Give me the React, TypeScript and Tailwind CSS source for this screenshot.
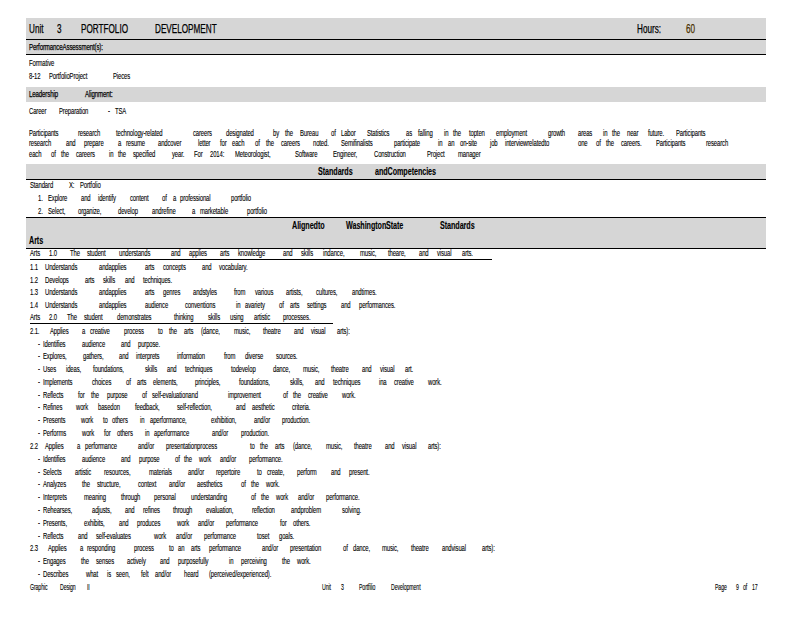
import type { ReactNode } from 'react';

// text "word@x word@x", x measured from the page's left edge
type Row = [y: number, text: string, rule?: number];

const LEFT = 26;

const Words = ({ text, start, squeeze }: { text: string; start: number; squeeze: string }) => {
  const items = text.split(' ').map((chunk) => {
    const at = chunk.lastIndexOf('@');
    return { word: chunk.slice(0, at), x: Number(chunk.slice(at + 1)) };
  });

  return (
    <>
      <span className="shrink-0" style={{ width: items[0].x - start }} />
      {items.map((item, i) => (
        <span
          key={i}
          className={`shrink-0 whitespace-nowrap ${item.word === '60' ? 'text-[#4a3000]' : ''}`}
          style={i < items.length - 1 ? { width: items[i + 1].x - item.x } : undefined}
        >
          <span className={`inline-block origin-left ${squeeze}`}>{item.word}</span>
        </span>
      ))}
    </>
  );
};

const Block = ({
  top,
  rows,
  className = '',
  squeeze = 'scale-x-[0.66]',
}: {
  top: number;
  rows: Row[];
  className?: string;
  squeeze?: string;
}) => (
  <div className={`box-border shrink-0 ${className}`} style={{ paddingTop: rows.length ? rows[0][0] - 6 - top : 0 }}>
    {rows.map(([y, text, rule], i) => {
      const next = rows[i + 1];
      return (
        <div key={i} style={{ height: next ? next[0] - y : 12 }}>
          {rule ? (
            <div className="ml-[4px] box-border flex h-[11px] items-center border-b border-black" style={{ width: rule }}>
              <Words text={text} start={LEFT + 4} squeeze={squeeze} />
            </div>
          ) : (
            <div className="flex h-[12px] items-center">
              <Words text={text} start={LEFT} squeeze={squeeze} />
            </div>
          )}
        </div>
      );
    })}
  </div>
);

const Heavy = ({ children }: { children: ReactNode }) => <div className="font-bold tracking-[-0.1px]">{children}</div>;

const bodyRows: Row[] = [
  [254, 'Arts@30 1.0@49 The@70 student@87 understands@119 and@171 applies@189 arts@220 knowledge@238 and@283 skills@301 indance,@323 music,@360 theare,@388 and@419 visual@437 arts.@462', 462],
  [267, '1.1@30 Understands@45 andapplies@99 arts@145 concepts@163 and@202 vocabulary.@219'],
  [280, '1.2@30 Develops@45 arts@85 skills@103 and@125 techniques.@143'],
  [292, '1.3@30 Understands@45 andapplies@99 arts@145 genres@163 andstyles@193 from@234 various@255 artists,@286 cultures,@316 andtimes.@352'],
  [305, '1.4@30 Understands@45 andapplies@99 audience@145 conventions@185 in@236 avariety@245 of@279 arts@290 settings@307 and@341 performances.@359'],
  [318, 'Arts@30 2.0@49 The@67 student@84 demonstrates@117 thinking@174 skills@208 using@230 artistic@254 processes.@283', 303],
  [331, '2.1.@30 Applies@50 a@82 creative@90 process@124 to@158 the@169 arts@184 (dance,@201 music,@234 theatre@263 and@294 visual@311 arts):@337'],
  [344, '-@38 Identifies@43 audience@82 and@121 purpose.@138'],
  [356, '-@38 Explores,@43 gathers,@83 and@119 interprets@136 information@177 from@224 diverse@245 sources.@276'],
  [369, '-@38 Uses@43 ideas,@66 foundations,@93 skills@145 and@167 techniques@185 todevelop@231 dance,@273 music,@303 theatre@331 and@362 visual@380 art.@405'],
  [382, '-@38 Implements@43 choices@92 of@126 arts@137 elements,@153 principles,@195 foundations,@239 skills,@290 and@315 techniques@333 ina@379 creative@394 work.@428'],
  [395, '-@38 Reflects@43 for@78 the@91 purpose@107 of@142 self-evaluationand@152 improvement@228 of@283 the@293 creative@308 work.@342'],
  [407, '-@38 Refines@43 work@76 basedon@98 feedback,@135 self-reflection,@177 and@236 aesthetic@252 criteria.@292'],
  [420, '-@38 Presents@43 work@81 to@103 others@112 in@140 aperformance,@150 exhibition,@211 and/or@254 production.@282'],
  [433, '-@38 Performs@43 work@82 for@104 others@117 in@145 aperformance@154 and/or@212 production.@241'],
  [446, '2.2@30 Applies@45 a@77 performance@85 and/or@138 presentationprocess@166 to@250 the@260 arts@275 (dance,@293 music,@326 theatre@354 and@385 visual@402 arts):@428'],
  [459, '-@38 Identifies@43 audience@82 and@121 purpose@139 of@175 the@184 work@199 and/or@220 performance.@249'],
  [472, '-@38 Selects@43 artistic@75 resources,@104 materials@149 and/or@188 repertoire@216 to@257 create,@267 perform@297 and@331 present.@349'],
  [484, '-@38 Analyzes@43 the@82 structure,@97 context@138 and/or@169 aesthetics@197 of@241 the@251 work.@266'],
  [497, '-@38 Interprets@43 meaning@84 through@121 personal@154 understanding@191 of@251 the@261 work@276 and/or@298 performance.@326'],
  [510, '-@38 Rehearses,@43 adjusts,@92 and@125 refines@143 through@173 evaluation,@206 reflection@252 andproblem@291 solving.@342'],
  [523, '-@38 Presents,@43 exhibits,@84 and@119 produces@137 work@177 and/or@198 performance@226 for@280 others.@293'],
  [536, '-@38 Reflects@43 and@78 self-evaluates@96 work@154 and/or@176 performance@204 toset@257 goals.@279'],
  [548, '2.3@30 Applies@48 a@80 responding@87 process@134 to@169 an@178 arts@191 performance@209 and/or@262 presentation@290 of@343 dance,@353 music,@382 theatre@411 andvisual@442 arts):@482'],
  [561, '-@38 Engages@43 the@81 senses@96 actively@127 and@160 purposefully@178 in@229 perceiving@241 the@282 work.@297'],
  [574, '-@38 Describes@43 what@86 is@107 seen,@116 felt@141 and/or@155 heard@184 (perceived/experienced).@209'],
];

export default function App() {
  return (
    <div className="h-[618px] w-[800px] overflow-hidden bg-white pt-[18px] pl-[26px] font-['Liberation_Sans',sans-serif] text-[9px] tracking-[-0.2px] text-black [-webkit-text-stroke:0.12px_currentColor]">
      <div className="w-[740px]">
        <Block
          top={18}
          squeeze="scale-x-[0.68]"
          className="h-[22px] border-b border-black bg-[#d6d6d6] text-[12px] tracking-[0px] [-webkit-text-stroke:0.25px_currentColor]"
          rows={[[29, 'Unit@29 3@57 PORTFOLIO@81 DEVELOPMENT@155 Hours:@637 60@686']]}
        />
        <Block
          top={40}
          squeeze="scale-x-[0.68]"
          className="h-[15px] border-b border-black bg-[#d6d6d6] [-webkit-text-stroke:0.25px_currentColor]"
          rows={[[48, 'PerformanceAssessment(s):@29']]}
        />
        <Block
          top={55}
          className="h-[32px]"
          rows={[
            [64, 'Formative@29'],
            [77, '8-12@29 PortfolioProject@49 Pieces@113'],
          ]}
        />
        <Block
          top={87}
          squeeze="scale-x-[0.68]"
          className="h-[15px] bg-[#d6d6d6] [-webkit-text-stroke:0.25px_currentColor]"
          rows={[[95, 'Leadership@29 Alignment:@85']]}
        />
        <Block
          top={102}
          className="h-[62px]"
          rows={[
            [112, 'Career@29 Preparation@59 -@108 TSA@115'],
            [134, 'Participants@29 research@78 technology-related@116 careers@193 designated@226 by@273 the@285 Bureau@300 of@331 Labor@341 Statistics@367 as@406 falling@418 in@444 the@453 topten@469 employment@496 growth@548 areas@578 in@603 the@612 near@627 future.@648 Participants@676'],
            [144, 'research@29 and@66 prepare@84 a@118 resume@126 andcover@158 letter@198 for@220 each@232 of@255 the@266 careers@281 noted.@313 Semifinalists@341 participate@394 in@438 an@448 on-site@460 job@490 interviewrelatedto@505 one@578 of@596 the@606 careers.@621 Participants@656 research@706'],
            [155, 'each@29 of@51 the@61 careers@76 in@109 the@118 specified@133 year.@172 For@194 2014:@210 Meteorologist,@235 Software@295 Engineer,@333 Construction@374 Project@427 manager@458'],
          ]}
        />
        <Heavy>
          <Block
            top={164}
            squeeze="scale-x-[0.72]"
            className="h-[16px] border-b border-black bg-[#d6d6d6] text-[10px]"
            rows={[[171, 'Standards@318 andCompetencies@375']]}
          />
        </Heavy>
        <Block
          top={180}
          className="h-[37px]"
          rows={[
            [185, 'Standard@30 X:@69 Portfolio@80'],
            [198, '1.@38 Explore@48 and@81 identify@98 content@130 of@162 a@173 professional@180 portfolio@231'],
            [211, '2.@38 Select,@48 organize,@78 develop@118 andrefine@152 a@192 marketable@200 portfolio@247'],
          ]}
        />
        <Heavy>
          <Block
            top={217}
            squeeze="scale-x-[0.72]"
            className="h-[32px] border-y border-black bg-[#d6d6d6] text-[10px]"
            rows={[
              [224, 'Alignedto@292 Washington@346 State@386 Standards@440'],
              [239, 'Arts@29'],
            ]}
          />
        </Heavy>
        <Block top={249} rows={bodyRows} />
        <Block
          top={580}
          squeeze="scale-x-[0.58]"
          rows={[[587, 'Graphic@30 Design@60 II@87 Unit@322 3@341 Portfilio@359 Development@391 Page@715 9@736 of@743 17@752']]}
        />
      </div>
    </div>
  );
}
